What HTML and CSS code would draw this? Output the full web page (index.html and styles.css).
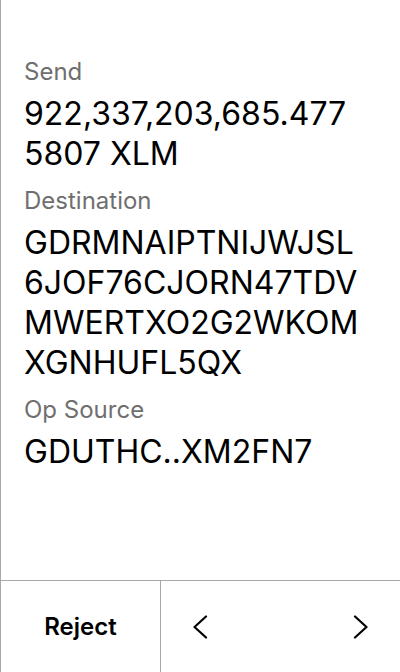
FILE: index.html
```html
<!DOCTYPE html>
<html lang="en">
<head>
<meta charset="utf-8">
<title>Review</title>
<link rel="stylesheet" href="styles.css">
</head>
<body>
<div class="screen">
  <main class="content">
    <section class="field">
      <div class="label">Send</div>
      <div class="value">922,337,203,685.4775807 XLM</div>
    </section>
    <section class="field">
      <div class="label">Destination</div>
      <div class="value">GDRMNAIPTNIJWJSL6JOF76CJORN47TDVMWERTXO2G2WKOMXGNHUFL5QX</div>
    </section>
    <section class="field">
      <div class="label">Op Source</div>
      <div class="value">GDUTHC..XM2FN7</div>
    </section>
  </main>
  <footer class="actions">
    <button class="reject">Reject</button>
    <div class="nav">
      <button class="nav-btn" aria-label="Previous">
        <svg width="16" height="24" viewBox="0 0 16 24"><polyline points="14,1.5 2.5,12 14,22.5" fill="none" stroke="#000" stroke-width="2.2" stroke-linecap="round" stroke-linejoin="round"/></svg>
      </button>
      <button class="nav-btn" aria-label="Next">
        <svg width="16" height="24" viewBox="0 0 16 24"><polyline points="2,1.5 13.5,12 2,22.5" fill="none" stroke="#000" stroke-width="2.2" stroke-linecap="round" stroke-linejoin="round"/></svg>
      </button>
    </div>
  </footer>
</div>
</body>
</html>
```

FILE: styles.css
```css
* {
  box-sizing: border-box;
}

html, body {
  margin: 0;
  padding: 0;
  background: #fff;
}

body {
  font-family: Inter, "Noto Sans", "Liberation Sans", sans-serif;
  color: #000;
}

.screen {
  width: 400px;
  height: 672px;
  display: flex;
  flex-direction: column;
  border-left: 1px solid #a8a8a8;
}

.content {
  flex: 1;
  padding: 56px 39px 0 23px;
  display: flex;
  flex-direction: column;
  gap: 11px;
}

.field {
  display: flex;
  flex-direction: column;
  gap: 6px;
}

.label {
  font-size: 24px;
  line-height: 32px;
  color: #6f6f6f;
}

.value {
  font-size: 32px;
  line-height: 40px;
  word-break: break-all;
}

.actions {
  height: 92px;
  border-top: 1px solid #a8a8a8;
  display: flex;
}

.reject {
  width: 160px;
  border: none;
  border-right: 1px solid #a8a8a8;
  background: none;
  font-family: inherit;
  font-size: 24px;
  font-weight: 600;
  color: #000;
  padding: 0;
}

.nav {
  flex: 1;
  display: flex;
  justify-content: space-between;
}

.nav-btn {
  width: 78px;
  border: none;
  background: none;
  padding: 0;
  display: flex;
  align-items: center;
  justify-content: center;
}
```
